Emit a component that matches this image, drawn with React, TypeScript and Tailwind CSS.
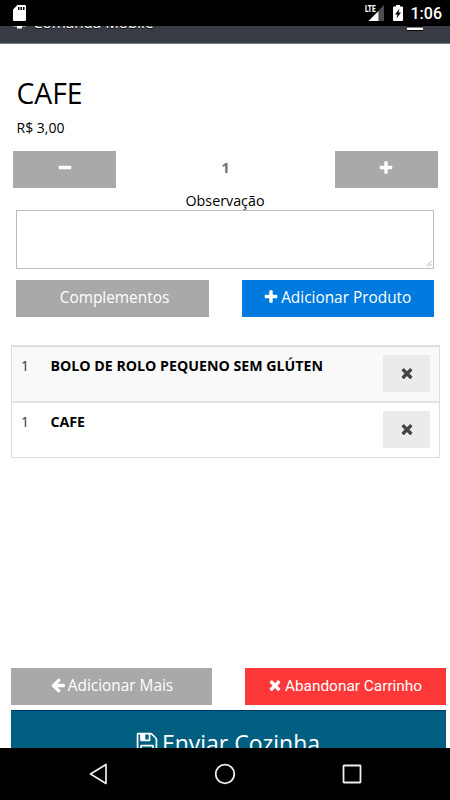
import { ReactNode } from 'react'

// Font Awesome 4 glyphs, drawn on a 1792 grid
const GLYPHS = {
  plus: 'M1600 736v192q0 40-28 68t-68 28h-416v416q0 40-28 68t-68 28h-192q-40 0-68-28t-28-68v-416h-416q-40 0-68-28t-28-68v-192q0-40 28-68t68-28h416v-416q0-40 28-68t68-28h192q40 0 68 28t28 68v416h416q40 0 68 28t28 68z',
  minus: 'M1600 736v192q0 40-28 68t-68 28h-1216q-40 0-68-28t-28-68v-192q0-40 28-68t68-28h1216q40 0 68 28t28 68z',
  times: 'M1490 1322q0 40-28 68l-136 136q-28 28-68 28t-68-28l-294-294-294 294q-28 28-68 28t-68-28l-136-136q-28-28-28-68t28-68l294-294-294-294q-28-28-28-68t28-68l136-136q28-28 68-28t68 28l294 294 294-294q28-28 68-28t68 28l136 136q28 28 28 68t-28 68l-294 294 294 294q28 28 28 68z',
  arrowLeft: 'M1664 896v128q0 53-32.5 90.5t-84.5 37.5h-704l293 294q38 36 38 90t-38 90l-75 76q-37 37-90 37-52 0-91-37l-651-652q-37-37-37-90 0-52 37-91l651-650q38-38 91-38 52 0 90 38l75 74q38 38 38 91t-38 91l-293 293h704q52 0 84.5 37.5t32.5 90.5z',
  save: 'M512 1536h768v-384h-768v384zm896 0h128v-896q0-14-10-38.5t-20-34.5l-281-281q-10-10-34-20t-39-10v416q0 40-28 68t-68 28h-576q-40 0-68-28t-28-68v-416h-128v1280h128v-416q0-40 28-68t68-28h832q40 0 68 28t28 68v416zm-384-928v-320q0-13-9.5-22.5t-22.5-9.5h-192q-13 0-22.5 9.5t-9.5 22.5v320q0 13 9.5 22.5t22.5 9.5h192q13 0 22.5-9.5t9.5-22.5zm640 32v928q0 40-28 68t-68 28h-1344q-40 0-68-28t-28-68v-1344q0-40 28-68t68-28h928q40 0 88 20t76 48l280 280q28 28 48 76t20 88z',
}

function Icon({ name, className = 'size-4' }: { name: keyof typeof GLYPHS; className?: string }) {
  return (
    <svg viewBox="0 0 1792 1792" fill="currentColor" className={`shrink-0 ${className}`}>
      <path d={GLYPHS[name]} />
    </svg>
  )
}

function Button({ className, children }: { className: string; children: ReactNode }) {
  return (
    <button className={`flex h-[37px] items-center justify-center pb-[3px] whitespace-nowrap ${className}`}>
      {children}
    </button>
  )
}

function StatusBar() {
  return (
    <div className="flex h-[26px] shrink-0 items-center bg-black pr-2 pl-[13px] text-white">
      <svg viewBox="0 0 13 16" className="h-4 w-[13px]">
        <path d="M4.5 0H12Q13 0 13 1V15Q13 16 12 16H1Q0 16 0 15V4.5Z" fill="#fff" />
        <path d="M5 2h1.5v3H5zM7.5 2H9v3H7.5zM10 2h1.5v3H10z" fill="#000" />
      </svg>
      <div className="ml-auto flex items-center">
        <div className="relative h-4 w-[19px]">
          <svg viewBox="0 0 19 16" className="h-4 w-[19px]">
            <path d="M19 0V16H13.5V5.5Z" fill="#4d4d4d" />
            <path d="M13.5 6V16H3.5Z" fill="#fff" />
          </svg>
          <span className="absolute top-0 left-0 origin-left scale-x-[.72] font-['Roboto'] text-[9px] leading-[8px] font-black">LTE</span>
        </div>
        <svg viewBox="0 0 10 16" className="ml-[9px] h-4 w-2.5">
          <path d="M3 0H7V1.5H9Q10 1.5 10 2.5V15Q10 16 9 16H1Q0 16 0 15V2.5Q0 1.5 1 1.5H3Z" fill="#fff" />
          <path d="M6.5 3.5 2 9.5H4.5L3.5 13.5 8 7.5H5.5Z" fill="#000" />
        </svg>
        <span className="ml-2 pt-0.5 font-['Roboto'] text-[16px] leading-6 font-medium">1:06</span>
      </div>
    </div>
  )
}

// The app header is scrolled up, only its lower edge stays in view
function Header() {
  return (
    <header className="flex h-[18px] shrink-0 items-end overflow-hidden border-b border-[#797d87] bg-[#383b43] px-[13px] text-white">
      <div className="flex h-[34px] w-full items-start">
        <svg viewBox="0 0 13 20" className="h-[20px] w-[13px]">
          <path d="M0 0H13V17.8H0Z" fill="#a5a7ab" />
          <path d="M4 16H9V19.5H4Z" fill="#fff" />
        </svg>
        <span className="ml-[7px] pt-0.5 text-[15.2px] leading-[23px] text-shadow-[0_1px_0_#111]">Comanda Mobile</span>
        <svg viewBox="0 0 16 22" className="ml-auto mr-[14px] h-[22px] w-4">
          <path d="M0 4H16V6H0ZM0 11H16V13H0ZM0 17H16V22H0Z" fill="#08090b" />
          <path d="M0 3H16V5.5H0ZM0 10H16V12.5H0ZM0 18.5H16V21H0Z" fill="#fff" />
        </svg>
      </div>
    </header>
  )
}

function CartRow({ qty, name, className }: { qty: number; name: string; className: string }) {
  return (
    <li className={`flex border-[#e2e2e2] pt-2 pr-[9px] pl-[9px] ${className}`}>
      <span className="w-[29.5px] pt-px text-[14px] leading-5 text-[#333]">{qty}</span>
      <span className="pt-px text-[14.2px] leading-5 font-bold">{name}</span>
      <button className="ml-auto flex h-[37px] w-[47px] items-center justify-center bg-[#ebebeb] pb-0.5 text-[#444]">
        <Icon name="times" className="size-4" />
      </button>
    </li>
  )
}

export default function App() {
  return (
    <div className="flex h-[800px] w-[450px] flex-col overflow-hidden bg-white font-['Open_Sans',sans-serif] text-black">
      <StatusBar />
      <Header />

      <main className="flex min-h-0 flex-1 flex-col overflow-hidden">
        <h1 className="mt-[29px] ml-[16.5px] text-[28.3px] leading-10">CAFE</h1>
        <p className="mt-[5px] ml-[16.5px] text-[14px] leading-5">R$ 3,00</p>

        <div className="mt-[13px] mr-3 ml-[13px] flex justify-between">
          <Button className="w-[103px] bg-[#a9a9a9] text-white"><Icon name="minus" /></Button>
          <span className="pt-1.5 text-[15px] leading-5 font-bold text-[#777]">1</span>
          <Button className="w-[103px] bg-[#a9a9a9] text-white"><Icon name="plus" /></Button>
        </div>

        <label className="mt-[3px] text-center text-[14.3px] leading-[19px]" htmlFor="obs">Observação</label>
        <div className="relative mx-4">
          <textarea id="obs" className="block h-[59px] w-full resize-none border border-[#bdbdbd] bg-white" />
          <svg viewBox="0 0 6 6" className="absolute right-0.5 bottom-0.5 size-1.5" stroke="#999" strokeWidth=".8">
            <path d="M0 5.5 5.5 0M3 5.5 5.5 3" />
          </svg>
        </div>

        <div className="mx-4 mt-[11px] flex justify-between">
          <Button className="w-[193px] bg-[#a9a9a9] pl-1 text-[15.4px] leading-[22px] text-white">
            <span className="pt-px">Complementos</span>
          </Button>
          <Button className="w-[192.5px] gap-0.5 bg-[#007ade] pr-px text-[15.4px] leading-[22px] text-white">
            <Icon name="plus" />
            <span className="pt-px">Adicionar Produto</span>
          </Button>
        </div>

        <ul className="mx-[11px] mt-7 w-[429px] border border-t-2 border-[#dedede]">
          <CartRow qty={1} name="BOLO DE ROLO PEQUENO SEM GLÚTEN" className="h-14 border-b-2 bg-[#f9f9f9]" />
          <CartRow qty={1} name="CAFE" className="h-[54px]" />
        </ul>

        <div className="mt-auto mr-1 ml-[11px] flex shrink-0 justify-between">
          <Button className="w-[201px] gap-0.5 bg-[#a9a9a9] text-[15.4px] leading-[22px] text-white">
            <Icon name="arrowLeft" />
            <span className="pt-0.5">Adicionar Mais</span>
          </Button>
          <Button className="w-[201px] gap-0.5 bg-[#fc3838] pr-0.5 font-['Roboto'] text-[15.4px] leading-[22px] text-white">
            <Icon name="times" />
            <span className="pt-0.5">Abandonar Carrinho</span>
          </Button>
        </div>

        <div className="mt-[5px] h-[38px] shrink-0 overflow-hidden">
          <button className="mr-1 ml-[11px] flex h-16 w-[435px] items-center justify-center gap-[3px] border-t border-[#00376b] bg-[#005f80] pr-0.5 text-[23px] leading-[34px] text-white">
            <Icon name="save" className="size-6" />
            Enviar Cozinha
          </button>
        </div>
      </main>

      <nav className="flex h-[52px] shrink-0 items-center justify-between bg-black pr-[88px] pl-[89px]">
        <svg viewBox="0 0 19 22" className="h-[22px] w-[19px]" fill="none" stroke="#eee" strokeWidth="1.7" strokeLinejoin="round">
          <path d="M17 1.5V20.5L1.5 11Z" />
        </svg>
        <svg viewBox="0 0 22 22" className="size-[22px]" fill="none" stroke="#eee" strokeWidth="1.8">
          <circle cx="11" cy="11" r="9.3" />
        </svg>
        <svg viewBox="0 0 20 20" className="size-5" fill="none" stroke="#eee" strokeWidth="1.8">
          <rect x="1.5" y="1.5" width="17" height="17" rx=".5" />
        </svg>
      </nav>
    </div>
  )
}
